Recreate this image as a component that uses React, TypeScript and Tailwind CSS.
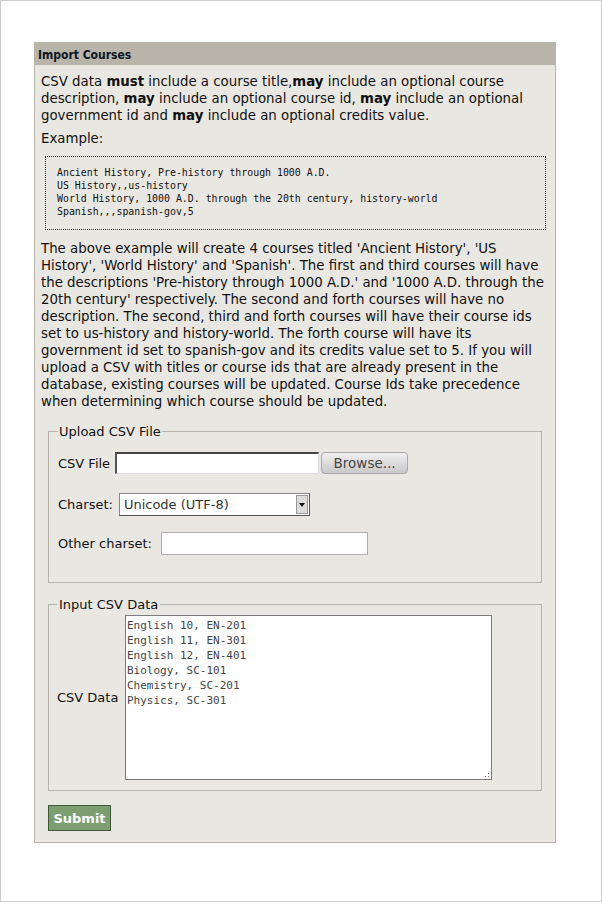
import React from "react";

const sans = { fontFamily: '"DejaVu Sans", Verdana, sans-serif' };

export default function App() {
  const csv = `English 10, EN-201
English 11, EN-301
English 12, EN-401
Biology, SC-101
Chemistry, SC-201
Physics, SC-301`;
  return (
    <div
      className="w-[602px] h-[902px] border border-[#cccccc] bg-white text-[13px] leading-[17px] text-[#111]"
      style={sans}
    >
      <div className="ml-[33px] mt-[41px] w-[522px] border border-[#b8b4a9] bg-[#e9e7e2]">
        <div className="h-[22px] bg-[#b8b4a9] pl-[3px] pt-[4px] text-[12px] leading-[16px] font-bold text-[#0d1424]" style={{ fontFamily: '"DejaVu Sans Condensed", "DejaVu Sans", sans-serif' }}>
          Import Courses
        </div>
        <div className="pl-[6px] pr-[6px] pt-[8px] pb-[11px]">
          <p className="text-[13.33px]">
            CSV data <b>must</b> include a course title,<b>may</b> include an optional course description,{" "}
            <b>may</b> include an optional course id, <b>may</b> include an optional government id and{" "}
            <b>may</b> include an optional credits value.
          </p>
          <p className="mt-[6px] text-[13.33px]">Example:</p>
          <pre
            className="mt-[9px] ml-[4px] w-[501px] border border-dotted border-[#333] pl-[11px] pt-[9px] pb-[11px] text-[9.9px] leading-[13px] text-[#111]"
            style={{ fontFamily: '"DejaVu Sans Mono", monospace' }}
          >
{`Ancient History, Pre-history through 1000 A.D.
US History,,us-history
World History, 1000 A.D. through the 20th century, history-world
Spanish,,,spanish-gov,5`}
          </pre>
          <p className="mt-[10px] text-[13.33px]">
            The above example will create 4 courses titled 'Ancient History', 'US History', 'World History' and
            'Spanish'. The first and third courses will have the descriptions 'Pre-history through 1000 A.D.' and
            '1000 A.D. through the 20th century' respectively. The second and forth courses will have no
            description. The second, third and forth courses will have their course ids set to us-history and
            history-world. The forth course will have its government id set to spanish-gov and its credits value
            set to 5. If you will upload a CSV with titles or course ids that are already present in the database,
            existing courses will be updated. Course Ids take precedence when determining which course should be
            updated.
          </p>

          <fieldset className="mt-[13px] ml-[7px] w-[494px] border border-[#b5b3ab] pl-[9px] pb-[27px]">
            <legend className="px-[1px] leading-[17px]">Upload CSV File</legend>
            <div className="mt-[12px] flex items-center h-[22px]">
              <span>CSV File</span>
              <div className="ml-[5px] w-[204px] h-[22px] bg-white border-t-2 border-l-2 border-t-[#444] border-l-[#555] border-b border-r border-b-[#ddd] border-r-[#ddd]" />
              <div className="ml-[2px] w-[87px] h-[22px] rounded-[4px] border border-[#a8a8a8] bg-gradient-to-b from-[#f0f0f0] to-[#c8c8c8] flex items-center justify-center text-[#444] text-[13.5px]">
                Browse...
              </div>
            </div>
            <div className="mt-[19px] flex items-center h-[23px]">
              <span>Charset:</span>
              <div className="ml-[6px] w-[191px] h-[23px] bg-white border border-[#888] border-r-[#555] border-b-[#555] flex items-center">
                <span className="flex-1 pl-[4px] text-[#333] text-[13px]">Unicode (UTF-8)</span>
                <div className="w-[12px] h-[19px] mr-[1px] bg-[#dcdcdc] border border-[#999] flex items-center justify-center">
                  <svg width="6" height="4" viewBox="0 0 6 4">
                    <path d="M0 0h6L3 4z" fill="#111" />
                  </svg>
                </div>
              </div>
            </div>
            <div className="mt-[16px] flex items-center h-[23px]">
              <span>Other charset:</span>
              <div className="ml-[9px] w-[207px] h-[23px] bg-white border border-[#b0b0b0]" />
            </div>
          </fieldset>

          <fieldset className="mt-[13px] ml-[7px] w-[494px] border border-[#b5b3ab] pl-[8px] pb-[10px]">
            <legend className="px-[2px] leading-[17px]">Input CSV Data</legend>
            <div className="mt-[2px] flex items-center">
              <span className="w-[68px]">CSV Data</span>
              <div className="relative w-[367px] h-[165px] bg-white border border-[#7a7a7a]">
                <pre
                  className="pl-[1px] pt-[2px] text-[11px] leading-[15px] text-[#444]"
                  style={{ fontFamily: '"DejaVu Sans Mono", monospace' }}
                >
                  {csv}
                </pre>
                <svg className="absolute right-[1px] bottom-[1px]" width="5" height="5" viewBox="0 0 5 5">
                  <rect x="3" y="0" width="1" height="1" fill="#777" />
                  <rect x="0" y="3" width="1" height="1" fill="#777" />
                  <rect x="3" y="3" width="1" height="1" fill="#777" />
                </svg>
              </div>
            </div>
          </fieldset>

          <div className="mt-[14px] ml-[7px] w-[63px] h-[26px] bg-[#7c9e70] border border-[#3d5a35] flex items-center justify-center text-white font-bold text-[13px]">
            Submit
          </div>
        </div>
      </div>
    </div>
  );
}
